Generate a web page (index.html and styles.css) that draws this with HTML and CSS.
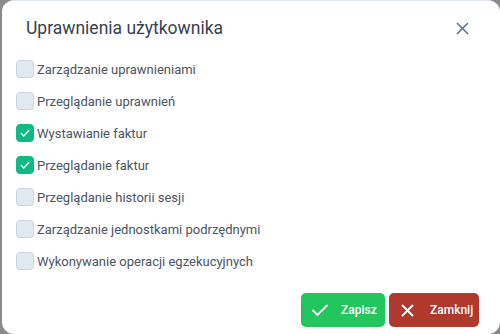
FILE: index.html
```html
<!DOCTYPE html>
<html lang="pl">
<head>
    <meta charset="UTF-8">
    <title>Uprawnienia użytkownika</title>
    <link rel="stylesheet" href="styles.css">
</head>
<body>

<div class="dialog">
    <!-- Header -->
    <div class="dialog-header">
        <h2 class="dialog-title">Uprawnienia użytkownika</h2>
        <button class="close-btn" aria-label="Zamknij">
            <svg width="13" height="13" viewBox="0 0 13 13"><path d="M1 1L12 12M12 1L1 12" stroke="#64748b" stroke-width="1.6" fill="none"/></svg>
        </button>
    </div>

    <!-- Permission list -->
    <div class="perm-list">
        <label class="perm-item"><span class="box"></span>Zarządzanie uprawnieniami</label>
        <label class="perm-item"><span class="box"></span>Przeglądanie uprawnień</label>
        <label class="perm-item"><span class="box checked"><svg width="12" height="12" viewBox="0 0 12 12"><path d="M2 6.2L4.8 9L10 3.2" stroke="#fff" stroke-width="1.4" fill="none"/></svg></span>Wystawianie faktur</label>
        <label class="perm-item"><span class="box checked"><svg width="12" height="12" viewBox="0 0 12 12"><path d="M2 6.2L4.8 9L10 3.2" stroke="#fff" stroke-width="1.4" fill="none"/></svg></span>Przeglądanie faktur</label>
        <label class="perm-item"><span class="box"></span>Przeglądanie historii sesji</label>
        <label class="perm-item"><span class="box"></span>Zarządzanie jednostkami podrzędnymi</label>
        <label class="perm-item"><span class="box"></span>Wykonywanie operacji egzekucyjnych</label>
    </div>

    <!-- Footer -->
    <div class="dialog-footer">
        <button class="btn btn-save">
            <svg width="18" height="14" viewBox="0 0 18 14"><path d="M1.5 7L6.5 12L16.5 2" stroke="#fff" stroke-width="1.8" fill="none"/></svg>
            Zapisz
        </button>
        <button class="btn btn-close">
            <svg width="13" height="13" viewBox="0 0 13 13"><path d="M1 1L12 12M12 1L1 12" stroke="#fff" stroke-width="1.8" fill="none"/></svg>
            Zamknij
        </button>
    </div>
</div>

</body>
</html>
```

FILE: styles.css
```css
body {
    margin: 0;
    background-color: #8a8a8a;
    font-family: Roboto, "Liberation Sans", Arial, sans-serif;
    width: 500px;
    height: 334px;
    overflow: hidden;
}
.dialog {
    margin-left: 2px;
    width: 498px;
    height: 334px;
    box-sizing: border-box;
    background-color: white;
    border-top: 1px solid #e2e8f0;
    border-radius: 12px;
    display: flex;
    flex-direction: column;
}
.dialog-header {
    display: flex;
    justify-content: space-between;
    align-items: center;
    padding: 14px 31px 0 24px;
    height: 26px;
}
.dialog-title {
    margin: 0;
    font-size: 17.5px;
    font-weight: normal;
    color: #374151;
}
.close-btn {
    background: none;
    border: none;
    padding: 0;
    cursor: pointer;
    display: flex;
}
.perm-list {
    display: flex;
    flex-direction: column;
    gap: 14px;
    padding: 19px 14px 0 14px;
    flex-grow: 1;
}
.perm-item {
    display: flex;
    align-items: center;
    gap: 3px;
    font-size: 13px;
    color: #4b5563;
    height: 18px;
}
.box {
    width: 16px;
    height: 16px;
    border: 1px solid #cbd5e1;
    background-color: #e2e8f0;
    border-radius: 4px;
    display: flex;
    align-items: center;
    justify-content: center;
}
.box.checked {
    background-color: #10b981;
    border-color: #10b981;
}
.dialog-footer {
    display: flex;
    justify-content: flex-end;
    gap: 4px;
    padding: 0 21px 7px 0;
}
.btn {
    display: flex;
    align-items: center;
    box-sizing: border-box;
    height: 34px;
    border: none;
    border-radius: 5px;
    color: white;
    font-family: Roboto, "Liberation Sans", Arial, sans-serif;
    font-size: 12px;
    font-weight: 500;
    cursor: pointer;
}
.btn-save {
    background-color: #22c55e;
    width: 84px;
    padding: 0 0 0 10px;
    gap: 12px;
}
.btn-close {
    background-color: #b0392e;
    width: 90px;
    padding: 0 0 0 12px;
    gap: 16px;
}
```
